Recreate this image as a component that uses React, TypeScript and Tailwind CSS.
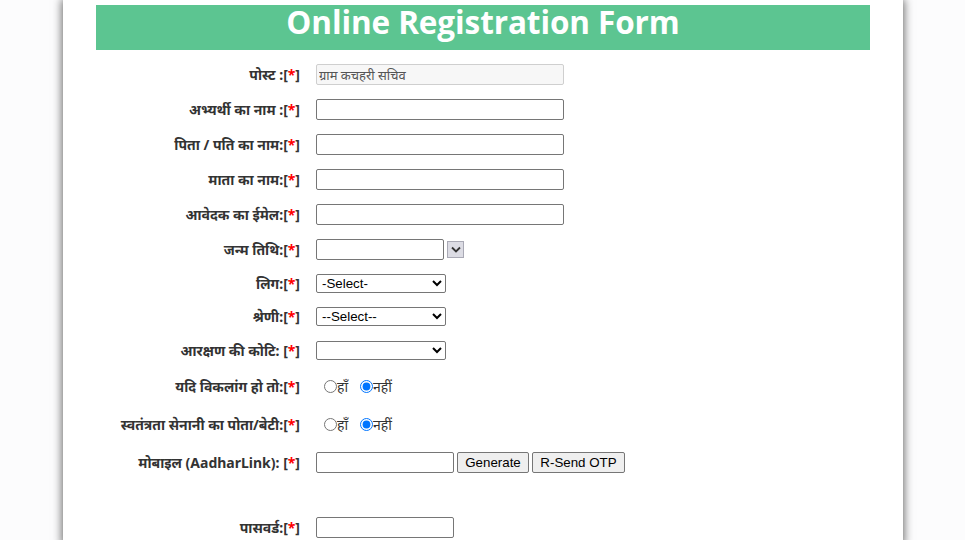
import React from "react";

const Req = () => (
  <span>
    [<span className="text-[#ff0000]">*</span>]
  </span>
);

function Row({
  label,
  h,
  children,
}: {
  label: string;
  h: string;
  children?: React.ReactNode;
}) {
  return (
    <div className={`flex items-center ${h}`}>
      <div className="w-[204px] shrink-0 text-right font-bold text-[14px] text-[#333]">
        {label}
        <Req />
      </div>
      <div className="ml-[16px] flex items-center">{children}</div>
    </div>
  );
}

const arial = { fontFamily: '"Liberation Sans", Arial, sans-serif' };

const inputCls =
  "h-[21px] border border-[#767676] rounded-[2px] bg-white px-[2px] text-[13px] outline-none";
const selectCls =
  "h-[19px] w-[130px] border border-[#767676] rounded-[2px] bg-white text-[13.33px] text-black pl-[1px]";
const btnCls =
  "h-[21px] border border-[#767676] rounded-[2px] bg-[#efefef] px-[6px] text-[13.33px] text-black leading-none";

function Radios({ name }: { name: string }) {
  return (
    <div className="flex items-center pl-[7px] text-[14px] text-[#333]">
      <input type="radio" name={name} className="m-0 ml-[1px] mr-0 h-[13px] w-[13px]" />
      <span>हाँ</span>
      <input
        type="radio"
        name={name}
        defaultChecked
        className="m-0 ml-[12px] h-[13px] w-[13px]"
      />
      <span>नहीं</span>
    </div>
  );
}

export default function App() {
  return (
    <div
      className="min-h-[540px] w-full bg-[#fcfcfd] overflow-hidden"
      style={{ fontFamily: '"Noto Sans", "Liberation Sans", Arial, sans-serif' }}
    >
      <div className="ml-[63px] w-[840px] min-h-[540px] bg-white shadow-[0_0_9px_1px_rgba(0,0,0,0.6)] px-[33px] pt-[5px]">
        <div className="h-[45px] bg-[#5cc591] flex items-start justify-center">
          <h1
            className="text-white font-bold text-[31.5px] leading-[34px] tracking-[-0.1px]"
            style={{ fontFamily: '"Open Sans", "Noto Sans", sans-serif' }}
          >
            Online Registration Form
          </h1>
        </div>
        <div className="pt-[7px]">
          <Row label="पोस्ट :" h="h-[35px]">
            <input
              readOnly
              value="ग्राम कचहरी सचिव"
              className="h-[21px] w-[248px] border border-[#cfcfcf] rounded-[2px] bg-[#f7f7f7] px-[2px] text-[13px] text-[#555] outline-none"
            />
          </Row>
          <Row label="अभ्यर्थी का नाम :" h="h-[35px]">
            <input className={`${inputCls} w-[248px]`} />
          </Row>
          <Row label="पिता / पति का नाम:" h="h-[35px]">
            <input className={`${inputCls} w-[248px]`} />
          </Row>
          <Row label="माता का नाम:" h="h-[35px]">
            <input className={`${inputCls} w-[248px]`} />
          </Row>
          <Row label="आवेदक का ईमेल:" h="h-[35px]">
            <input className={`${inputCls} w-[248px]`} />
          </Row>
          <Row label="जन्म तिथि:" h="h-[35px]">
            <input className={`${inputCls} w-[128px]`} />
            <div className="ml-[3px] h-[17px] w-[17px] border border-[#a9a9b5] bg-[#dcdce4] flex items-center justify-center">
              <svg width="10" height="7" viewBox="0 0 10 7">
                <path d="M1 1.5 L5 5.5 L9 1.5" stroke="#333" strokeWidth="1.8" fill="none" />
              </svg>
            </div>
          </Row>
          <Row label="लिग:" h="h-[33px]">
            <select className={selectCls} style={arial} defaultValue="s">
              <option value="s">-Select-</option>
            </select>
          </Row>
          <Row label="श्रेणी:" h="h-[33px]">
            <select className={selectCls} style={arial} defaultValue="s">
              <option value="s">--Select--</option>
            </select>
          </Row>
          <Row label="आरक्षण की कोटि: " h="h-[34px]">
            <select className={selectCls} style={arial} defaultValue="s">
              <option value="s"></option>
            </select>
          </Row>
          <Row label="यदि विकलांग हो तो:" h="h-[38px]">
            <Radios name="vk" />
          </Row>
          <Row label="स्वतंत्रता सेनानी का पोता/बेटी:" h="h-[39px]">
            <Radios name="ss" />
          </Row>
          <Row label="मोबाइल (AadharLink): " h="h-[37px]">
            <input className={`${inputCls} w-[138px]`} />
            <button className={`${btnCls} ml-[3px] w-[72px]`} style={arial}>
              Generate
            </button>
            <button className={`${btnCls} ml-[3px] w-[93px]`} style={arial}>
              R-Send OTP
            </button>
          </Row>
          <div className="h-[29px]" />
          <Row label="पासवर्ड:" h="h-[35px]">
            <input className={`${inputCls} w-[138px]`} />
          </Row>
        </div>
      </div>
    </div>
  );
}
